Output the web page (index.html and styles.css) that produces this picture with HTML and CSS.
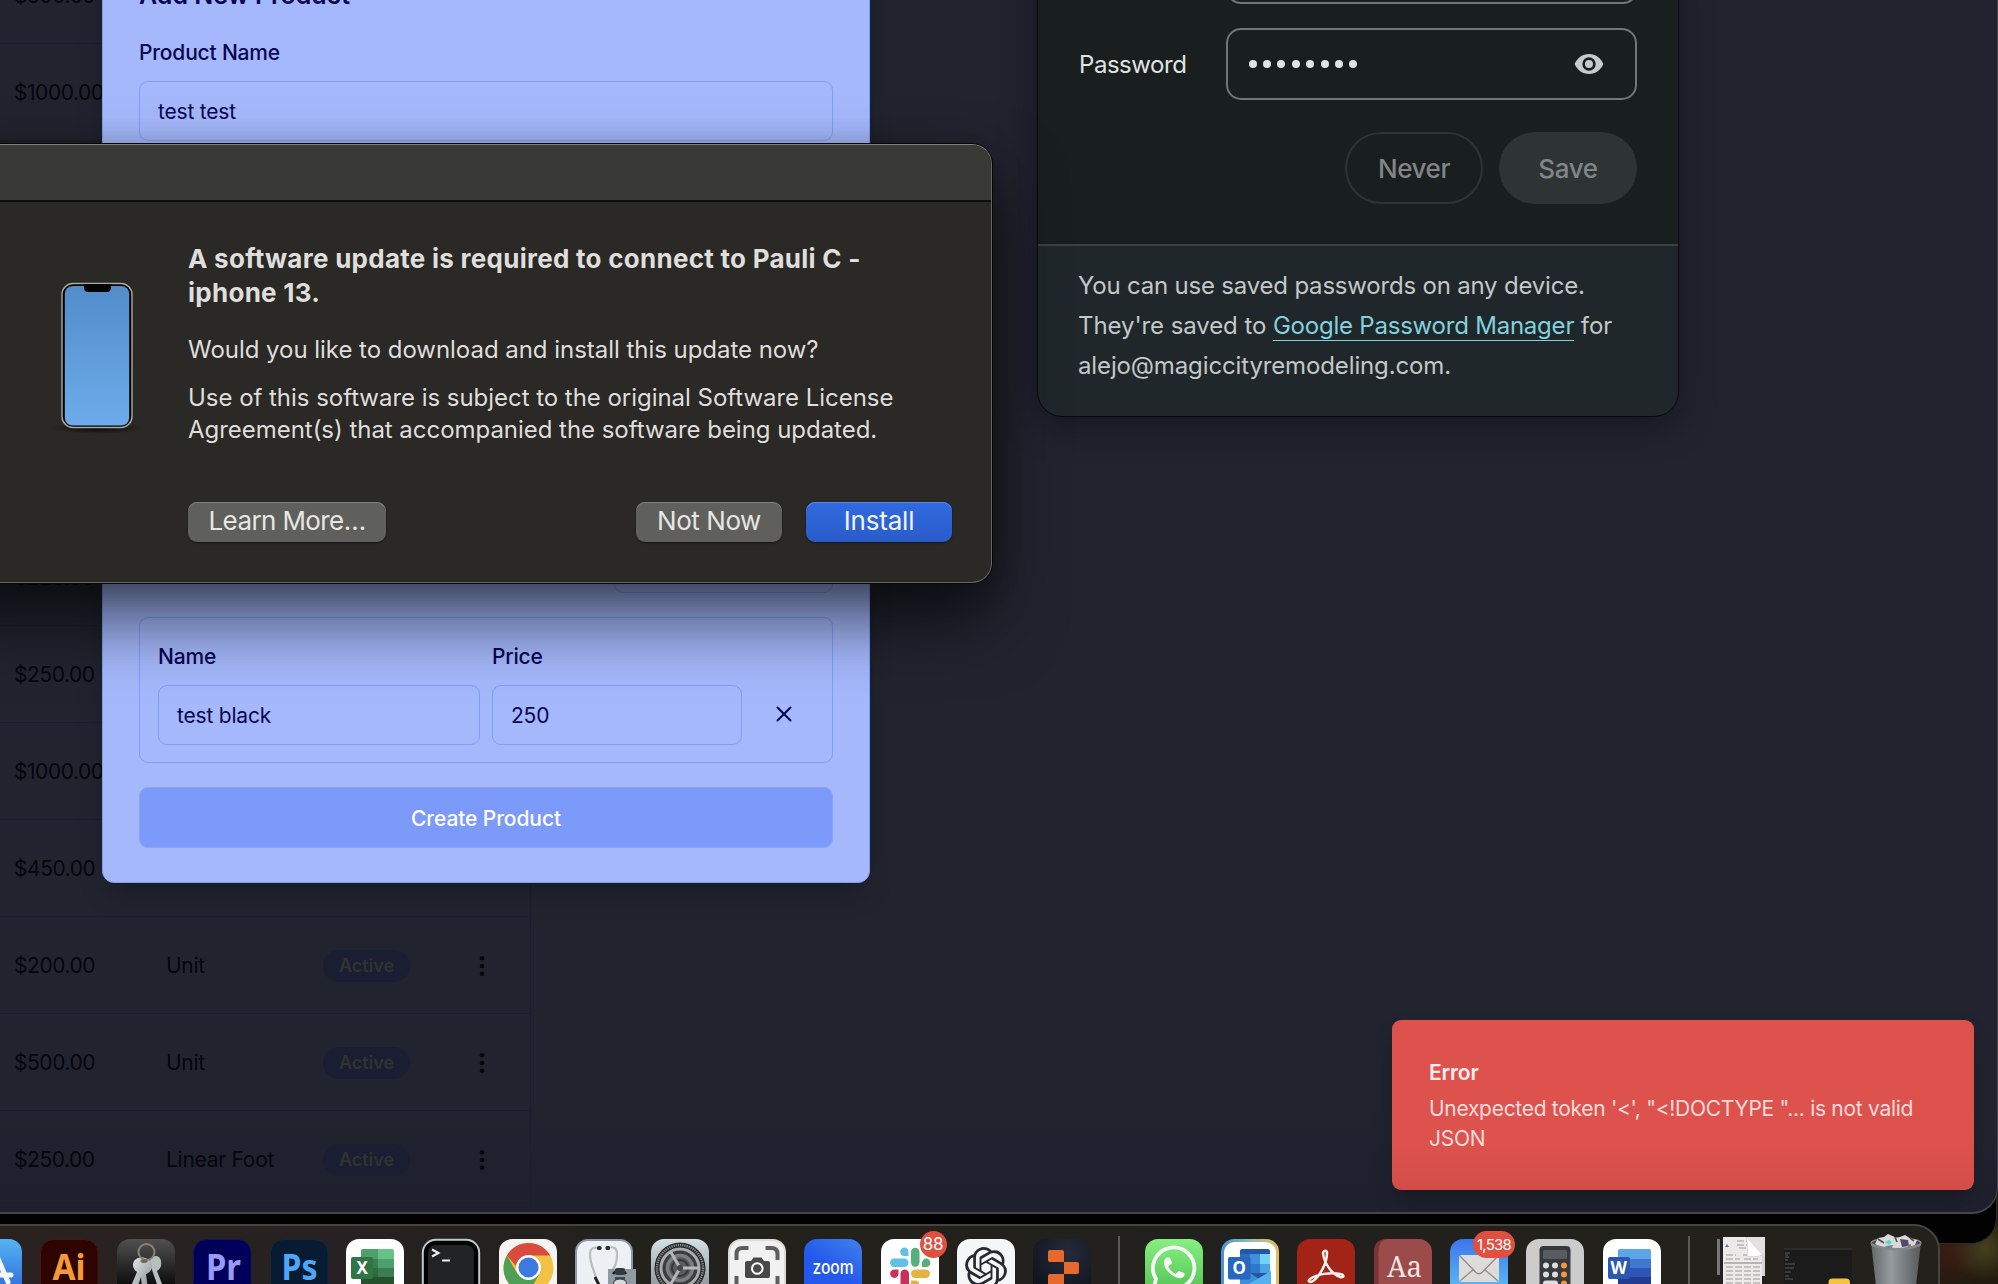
FILE: index.html
```html
<!DOCTYPE html>
<html lang="en">
<head>
<meta charset="utf-8">
<title>Products</title>
<link rel="stylesheet" href="styles.css">
</head>
<body>
<div class="desktop">
  <div class="back-window"></div>

  <main class="browser">
    <div class="table">
      <div class="row"><span>$500.00</span></div>
      <div class="row"><span>$1000.00</span></div>
      <div class="row"></div>
      <div class="row"></div>
      <div class="row"></div>
      <div class="row"></div>
      <div class="row"><span>$220.00</span></div>
      <div class="row"><span>$250.00</span></div>
      <div class="row"><span>$1000.00</span></div>
      <div class="row"><span>$450.00</span></div>
      <div class="row"><span>$200.00</span><span>Unit</span><span class="badge">Active</span><svg class="dots" viewBox="0 0 24 24"><circle cx="12" cy="4.2" r="2.3"/><circle cx="12" cy="12" r="2.3"/><circle cx="12" cy="19.8" r="2.3"/></svg></div>
      <div class="row"><span>$500.00</span><span>Unit</span><span class="badge">Active</span><svg class="dots" viewBox="0 0 24 24"><circle cx="12" cy="4.2" r="2.3"/><circle cx="12" cy="12" r="2.3"/><circle cx="12" cy="19.8" r="2.3"/></svg></div>
      <div class="row"><span>$250.00</span><span>Linear Foot</span><span class="badge">Active</span><svg class="dots" viewBox="0 0 24 24"><circle cx="12" cy="4.2" r="2.3"/><circle cx="12" cy="12" r="2.3"/><circle cx="12" cy="19.8" r="2.3"/></svg></div>
      <div class="row"></div>
    </div>

    <section class="modal">
      <h2 class="modal-title">Add New Product</h2>
      <div class="label">Product Name</div>
      <div class="input">test test</div>
      <div class="add-option"></div>
      <div class="option">
        <div class="field name"><div class="label">Name</div><div class="input">test black</div></div>
        <div class="field price"><div class="label">Price</div><div class="input">250</div></div>
        <div class="remove"><svg width="16" height="16" viewBox="0 0 16 16"><path d="M1.5 1.5l13 13M14.500 1.500l-13 13" fill="none" stroke="#0a0550" stroke-width="2" stroke-linecap="round"/></svg></div>
      </div>
      <div class="create">Create Product</div>
    </section>

    <section class="bubble">
      <div class="bubble-body">
        <div class="user-input"></div>
        <div class="pw-row">
          <span class="pw-label">Password</span>
          <div class="pw-input">
            <div class="pw-dots"><i></i><i></i><i></i><i></i><i></i><i></i><i></i><i></i></div>
            <svg width="30" height="22" viewBox="0 0 30 22"><path fill="#c6cccb" fill-rule="evenodd" d="M15 1C8.500 1 3 5 .7 11 3 17 8.500 21 15 21s12-4 14.300-10C27 5 21.500 1 15 1zm0 16.700a6.700 6.700 0 1 1 0-13.400 6.700 6.700 0 0 1 0 13.400zm0-2.700a4 4 0 1 0 0-8 4 4 0 0 0 0 8z"/></svg>
          </div>
        </div>
        <div class="bubble-actions"><span class="pill never">Never</span><span class="pill save">Save</span></div>
      </div>
      <div class="bubble-foot">
        <div class="l1">You can use saved passwords on any device.</div>
        <div class="l2">They're saved to <a>Google Password Manager</a> for</div>
        <div class="l3">alejo@magiccityremodeling.com.</div>
      </div>
    </section>

    <section class="toast">
      <strong>Error</strong>
      <p>Unexpected token '&lt;', "&lt;!DOCTYPE "... is not valid JSON</p>
    </section>
  </main>

  <section class="alert">
    <div class="titlebar"></div>
    <div class="alert-body">
      <svg class="phone" width="92" height="160" viewBox="0 0 92 160">
        <defs><linearGradient id="ph" x1="0" y1="0" x2="0" y2="1"><stop offset="0" stop-color="#528dca"/><stop offset="1" stop-color="#6dabea"/></linearGradient>
        <radialGradient id="ps"><stop offset="0" stop-color="#000" stop-opacity=".8"/><stop offset="1" stop-color="#000" stop-opacity="0"/></radialGradient></defs>
        <ellipse cx="46" cy="147" rx="46" ry="6" fill="url(#ps)"/>
        <rect x="11" y="2.500" width="70" height="144" rx="11" fill="#000" stroke="#a9aba4" stroke-width="1.400"/>
        <rect x="13.800" y="5" width="64.400" height="139.500" rx="8" fill="url(#ph)"/>
        <path d="M32 3h29c-.8 1-1 2-1 4 0 2-1.500 4-4 4H37c-2.500 0-4-2-4-4 0-2-.2-3-1-4z" fill="#050505"/>
      </svg>
      <div class="alert-text">
        <h1>A software update is required to connect to Pauli C -<br>iphone 13.</h1>
        <p>Would you like to download and install this update now?</p>
        <p>Use of this software is subject to the original Software License<br>Agreement(s) that accompanied the software being updated.</p>
        <div class="alert-actions">
          <span class="btn learn">Learn More…</span>
          <span class="btn notnow">Not Now</span>
          <span class="btn install">Install</span>
        </div>
      </div>
    </div>
  </section>

  <nav class="dock">
    <svg class="app" viewBox="0 0 58 58"><defs><linearGradient id="as" x1="0" y1="0" x2="0" y2="1"><stop offset="0" stop-color="#55b4f0"/><stop offset="1" stop-color="#2a62dc"/></linearGradient></defs><rect width="58" height="58" rx="13" fill="url(#as)"/><path d="M9 38.500h17M36 36h11M32 15L44 43" stroke="#f4f7fb" stroke-width="5" stroke-linecap="round" fill="none"/></svg>
    <svg class="app" viewBox="0 0 58 58"><rect x=".5" y=".5" width="57.500" height="57" rx="13" fill="#2e0300" stroke="#421a12"/><text x="12.500" y="41" font-size="36" textLength="33" lengthAdjust="spacingAndGlyphs" fill="#f49b37">Ai</text></svg>
    <svg class="app" viewBox="0 0 58 58"><defs><linearGradient id="kc" x1="0" y1="0" x2="0" y2="1"><stop offset="0" stop-color="#505050"/><stop offset=".8" stop-color="#0c0c0c"/></linearGradient><linearGradient id="ky" x1="0" y1="0" x2="1" y2="1"><stop offset="0" stop-color="#e4e9e9"/><stop offset="1" stop-color="#87908f"/></linearGradient></defs><rect width="58" height="58" rx="13" fill="url(#kc)"/><path d="M33 21c2-5 10-6 11 1 1 5-1 8-4 10l5 13-4 3-7-20z" fill="#b6bfbe"/><path d="M17 22c4-6 16-4 18 3 1 6-3 9-6 10l2 15h-6l-1-12-4 12-6-3 6-14c-4-3-5-7-3-11z" fill="url(#ky)"/><circle cx="29.500" cy="13" r="8" fill="none" stroke="#8b8178" stroke-width="2"/><ellipse cx="27" cy="22" rx="3.500" ry="2" fill="#75665f"/></svg>
    <svg class="app" viewBox="0 0 58 58"><rect x=".5" y=".5" width="57.500" height="57" rx="13" fill="#00005a" stroke="#17174a"/><text x="13" y="41" font-size="36" textLength="35" lengthAdjust="spacingAndGlyphs" fill="#9a9af6">Pr</text></svg>
    <svg class="app" viewBox="0 0 58 58"><rect x=".5" y=".5" width="57.500" height="57" rx="13" fill="#071c33" stroke="#14283c"/><text x="11.500" y="41" font-size="36" textLength="36" lengthAdjust="spacingAndGlyphs" fill="#4ea6f8">Ps</text></svg>
    <svg class="app" viewBox="0 0 58 58"><rect width="58" height="58" rx="13" fill="#fff"/><path d="M17 10h15v10H15v-8q0-2 2-2z" fill="#4d9f6b"/><path d="M32 10h14q2 0 2 2v8H32z" fill="#67c287"/><path d="M15 20h17v9H15z" fill="#3b7d50"/><path d="M32 20h16v9H32z" fill="#4d9f6b"/><path d="M15 29h33v9H15z" fill="#2f6a41"/><path d="M32 29h16v9H32z" fill="#3b7d50"/><path d="M15 38h33v12H15z" fill="#25512f"/><rect x="5" y="18" width="22" height="22" rx="2" fill="#2f7646"/><text x="10.500" y="35" font-size="17" fill="#fff">X</text></svg>
    <svg class="app" viewBox="0 0 58 58"><rect x=".8" y=".8" width="56.400" height="56.400" rx="13" fill="#000" stroke="#bccbd3" stroke-width="2"/><rect x="6" y="6" width="46" height="48" rx="8" fill="#222325"/><path d="M10 10.500l6.500 3.500-6.500 3.500M20 21.500h8" stroke="#f2f2f2" stroke-width="2" fill="none"/></svg>
    <svg class="app" viewBox="0 0 58 58"><rect width="58" height="58" rx="13" fill="#f5f4f2"/><circle cx="29.500" cy="29" r="25" fill="#f3c144"/><path d="M7.850 16.500A25 25 0 0 1 51.150 16.500H29.500v25z" fill="#d94c3d"/><path d="M7.850 16.500A25 25 0 0 0 29.500 54L40.300 35.250H18.700z" fill="#4f9e55"/><circle cx="29.500" cy="28.500" r="12.500" fill="#fff"/><circle cx="29.500" cy="28.500" r="10" fill="#3f78e0"/></svg>
    <svg class="app" viewBox="0 0 58 58"><rect x="1" y="1" width="56" height="56" rx="12" fill="#edf0f5" stroke="#8b98a3" stroke-width="2"/><path d="M23 9c-6-1-8 1-8 6 0 11 4 15 6 24M32 9c7-2 10 0 10 6 0 9-2 13-6 18" stroke="#b9bcc0" stroke-width="2.200" fill="none"/><rect x="22" y="7" width="4.500" height="4" rx="1.500" fill="#2b2d30"/><rect x="30.500" y="7" width="4.500" height="4" rx="1.500" fill="#2b2d30"/><path d="M20 38l5 10" stroke="#222" stroke-width="3"/><path d="M33 30h28v28H33z" fill="#8f9aa2"/><path d="M38 35q7-8 13 0" fill="none" stroke="#17181a" stroke-width="2.500"/><rect x="40" y="29" width="10" height="7" rx="2" fill="#333b42"/><path d="M40 38h10v6H40z" fill="#40464b"/><path d="M39 42q6-4 12 0l2 13H37z" fill="#d7dbde" stroke="#3b4045"/></svg>
    <svg class="app" viewBox="0 0 58 58"><defs><linearGradient id="st" x1="0" y1="0" x2="0" y2="1"><stop offset="0" stop-color="#d3e0e7"/><stop offset="1" stop-color="#85888a"/></linearGradient></defs><rect width="58" height="58" rx="13" fill="url(#st)"/><circle cx="29" cy="29" r="25.500" fill="#26282a"/><circle cx="29" cy="29" r="23" fill="none" stroke="#8d9092" stroke-width="2.500" stroke-dasharray="1.200 1"/><circle cx="29" cy="29" r="19" fill="#3b3d3f" stroke="#a9acae" stroke-width="3"/><circle cx="29" cy="29" r="12.500" fill="#55585a" stroke="#7b7e80" stroke-width="3.500"/><circle cx="29" cy="29" r="8" fill="#5a5d5f" stroke="#37393b" stroke-width="2"/><path d="M29 29h19M29 29L19.500 12.500M29 29l-9.500 16.500" stroke="#b5b8ba" stroke-width="3"/><circle cx="29" cy="29" r="3" fill="#444"/></svg>
    <svg class="app" viewBox="0 0 58 58"><rect width="58" height="58" rx="13" fill="#dedad8"/><rect x="2" y="2" width="54" height="56" rx="11" fill="#f2f1f1"/><path d="M8.500 21v-6q0-6 6-6h6M37.500 9h6q6 0 6 6v6M8.500 37v12M49.500 37v12" stroke="#5e5e5e" stroke-width="4" fill="none"/><path d="M19 22h4l2.500-3.500h8L36 22h4q2 0 2 2v13q0 2-2 2H19q-2 0-2-2V24q0-2 2-2z" fill="#484848"/><circle cx="29.300" cy="29.500" r="5.300" fill="#4a4a4a" stroke="#fff" stroke-width="2"/></svg>
    <svg class="app" viewBox="0 0 58 58"><defs><linearGradient id="zm" x1="1" y1="0" x2="0.600" y2=".6"><stop offset="0" stop-color="#4182e9"/><stop offset="1" stop-color="#2459ee"/></linearGradient></defs><rect width="58" height="58" rx="13" fill="url(#zm)"/><text class="soft" x="8.500" y="34.800" font-size="18.500" textLength="41" lengthAdjust="spacingAndGlyphs" fill="#fff">zoom</text></svg>
    <div class="app badged"><svg class="app" viewBox="0 0 58 58"><rect width="58" height="58" rx="13" fill="#fff"/><path d="M27.500 17h-4a4.200 4.200 0 1 1 4-4.200z" fill="#5fc0e8"/><rect x="9" y="19.500" width="18.500" height="8.500" rx="4.200" fill="#5fc0e8"/><rect x="30" y="8.700" width="8.500" height="19" rx="4.200" fill="#56ae7d"/><path d="M41 28v-4a4.200 4.200 0 1 1 4.200 4z" fill="#56ae7d"/><path d="M17.500 30.500v4a4.200 4.200 0 1 1-4.200-4z" fill="#cd2f5b"/><rect x="19.500" y="30.500" width="8.500" height="19" rx="4.200" fill="#cd2f5b"/><rect x="30" y="30.500" width="19" height="8.500" rx="4.200" fill="#e3b344"/><path d="M30 41.500h4a4.200 4.200 0 1 1-4 4.200z" fill="#e3b344"/></svg><span class="count">88</span></div>
    <svg class="app" viewBox="0 0 58 58"><rect width="58" height="58" rx="13" fill="#f5f6f8"/><path transform="translate(8 8) scale(1.75)" fill="#262a30" d="M22.2819 9.8211a5.9847 5.9847 0 0 0-.5157-4.9108 6.0462 6.0462 0 0 0-6.5098-2.9A6.0651 6.0651 0 0 0 4.9807 4.1818a5.9847 5.9847 0 0 0-3.9977 2.9 6.0462 6.0462 0 0 0 .7427 7.0966 5.98 5.98 0 0 0 .511 4.9107 6.051 6.051 0 0 0 6.5146 2.9001A5.9847 5.9847 0 0 0 13.2599 24a6.0557 6.0557 0 0 0 5.7718-4.2058 5.9894 5.9894 0 0 0 3.9977-2.9001 6.0557 6.0557 0 0 0-.7475-7.0729zm-9.022 12.6081a4.4755 4.4755 0 0 1-2.8764-1.0408l.1419-.0804 4.7783-2.7582a.7948.7948 0 0 0 .3927-.6813v-6.7369l2.02 1.1686a.071.071 0 0 1 .038.052v5.5826a4.504 4.504 0 0 1-4.4945 4.4944zm-9.6607-4.1254a4.4708 4.4708 0 0 1-.5346-3.0137l.142.0852 4.783 2.7582a.7712.7712 0 0 0 .7806 0l5.8428-3.3685v2.3324a.0804.0804 0 0 1-.0332.0615L9.74 19.9502a4.4992 4.4992 0 0 1-6.1408-1.6464zM2.3408 7.8956a4.485 4.485 0 0 1 2.3655-1.9728V11.6a.7664.7664 0 0 0 .3879.6765l5.8144 3.3543-2.0201 1.1685a.0757.0757 0 0 1-.071 0l-4.8303-2.7865A4.504 4.504 0 0 1 2.3408 7.872zm16.5963 3.8558L13.1038 8.364 15.1192 7.2a.0757.0757 0 0 1 .071 0l4.8303 2.7913a4.4944 4.4944 0 0 1-.6765 8.1042v-5.6772a.79.79 0 0 0-.407-.667zm2.0107-3.0231l-.142-.0852-4.7735-2.7818a.7759.7759 0 0 0-.7854 0L9.409 9.2297V6.8974a.0662.0662 0 0 1 .0284-.0615l4.8303-2.7866a4.4992 4.4992 0 0 1 6.6802 4.66zM8.3065 12.863l-2.02-1.1638a.0804.0804 0 0 1-.038-.0567V6.0742a4.4992 4.4992 0 0 1 7.3757-3.4537l-.142.0805L8.704 5.459a.7948.7948 0 0 0-.3927.6813zm1.0976-2.3654l2.602-1.4998 2.6069 1.4998v2.9994l-2.5974 1.4997-2.6067-1.4997Z"/></svg>
    <svg class="app" viewBox="0 0 58 58"><defs><radialGradient id="rp" cx=".6" cy=".25" r=".7"><stop offset="0" stop-color="#262b3b"/><stop offset="1" stop-color="#11151f"/></radialGradient></defs><rect width="58" height="58" rx="13" fill="url(#rp)"/><path d="M17 11h12q2 0 2 2v10H17q-2 0-2-2v-8q0-2 2-2zM31 23h13q2 0 2 2v8q0 2-2 2H31zM17 35h14v10q0 2-2 2H17q-2 0-2-2v-8q0-2 2-2z" fill="#e66a2e"/></svg>
    <i class="sep first"></i>
    <svg class="app" viewBox="0 0 58 58"><defs><linearGradient id="wa" x1="0" y1="0" x2="0" y2="1"><stop offset="0" stop-color="#86f082"/><stop offset="1" stop-color="#4fbf4f"/></linearGradient></defs><rect width="58" height="58" rx="13" fill="url(#wa)"/><path d="M11 40a20.700 20.700 0 1 1 8 7.500L8.500 50z" fill="none" stroke="#f5f8f5" stroke-width="3.800"/><path transform="translate(15.500 15) scale(1.150)" fill="#f5f8f5" d="M6.620 10.790c1.440 2.830 3.760 5.140 6.590 6.590l2.200-2.200c.27-.27.67-.36 1.020-.24l3.700 1.300c.6.300.9.700.87 1.260C21 20 18.500 21 16.500 21 9 20 3 12.500 3 7.500 3 5.500 4 3.300 5.500 3h1.800c.6 0 1 .4 1.200 1l1.300 3c.2.500.1 1-.1 1.300z"/></svg>
    <svg class="app" viewBox="0 0 58 58"><defs><linearGradient id="ol"><stop offset="0" stop-color="#4a8fd8"/><stop offset=".5" stop-color="#8dc0ae"/><stop offset="1" stop-color="#e4bd62"/></linearGradient></defs><rect width="58" height="58" rx="13" fill="url(#ol)"/><rect x="3" y="3" width="52" height="58" rx="11" fill="#fff"/><path d="M19 12q0-2 2-2h26q2 0 2 2v3H19z" fill="#2257a5"/><path d="M19 15h10v20H19z" fill="#2c6bc2"/><path d="M29 15h10v10H29z" fill="#418fdc"/><path d="M39 15h10v10H39z" fill="#74d3fa"/><path d="M29 25h10v10H29z" fill="#2e78cc"/><path d="M39 25h10v10H39z" fill="#4aa5e6"/><path d="M19 35h30v20H19z" fill="#3b8fdc"/><path d="M29 34h18L38 40z" fill="#2456a0"/><path d="M19 50L50 32v23H19z" fill="#54b1ee"/><rect x="7" y="18" width="22.500" height="22.500" rx="2" fill="#2767c0"/><text x="11.500" y="35" font-size="17" fill="#fff">O</text></svg>
    <svg class="app" viewBox="0 0 58 58"><rect width="58" height="58" rx="13" fill="#a32417"/><path d="M26 14c1-3 4-3 4 0 0 11-8 24-14 28-3 2-6 0-3-2 7-5 21-7 30-5 5 1 4 4 0 3-7-2-16-13-17-24z" fill="none" stroke="#fbf2f0" stroke-width="2.500"/></svg>
    <svg class="app" viewBox="0 0 58 58"><rect width="58" height="58" rx="13" fill="#9b4b49"/><path d="M13 0v0Q5 1 4.500 13v32q0 8 6 12.500Q0 55 0 45V13Q0 0 13 0z" fill="#7d3435"/><text class="serif" x="13" y="38" font-size="29" textLength="35" lengthAdjust="spacingAndGlyphs" fill="#f1e4e1">Aa</text></svg>
    <div class="app badged"><svg class="app" viewBox="0 0 58 58"><defs><linearGradient id="ml" x1="0" y1="0" x2="0" y2="1"><stop offset="0" stop-color="#3c74ec"/><stop offset="1" stop-color="#5fc6f7"/></linearGradient></defs><rect width="58" height="58" rx="13" fill="url(#ml)"/><rect x="9" y="16" width="40" height="27" rx="2.500" fill="#dedcda"/><path d="M10 17l15.500 16q3.500 3.500 7 0L48 17M10 42l14-12M48 42L34 30" fill="none" stroke="#8f8c8a" stroke-width="1.300"/></svg><span class="count wide">1,538</span></div>
    <svg class="app" viewBox="0 0 58 58"><rect width="58" height="58" rx="13" fill="#cbcccb"/><rect x="13.500" y="7" width="31" height="46" rx="4" fill="#36393d"/><rect x="17" y="11" width="24" height="9" rx="1.500" fill="#595c5f"/><g fill="#dedede"><circle cx="20" cy="26.500" r="3"/><circle cx="29" cy="26.500" r="3"/><circle cx="20" cy="35.500" r="3"/><circle cx="29" cy="35.500" r="3"/><rect x="17" y="41.500" width="15" height="6" rx="3"/></g><g fill="#f19a37"><circle cx="38" cy="26.500" r="3"/><circle cx="38" cy="35.500" r="3"/><circle cx="38" cy="44.500" r="3"/></g></svg>
    <svg class="app" viewBox="0 0 58 58"><rect width="58" height="58" rx="13" fill="#fff"/><path d="M15 12q0-2 2-2h29q2 0 2 2v8H15z" fill="#5da4e8"/><path d="M15 20h33v9H15z" fill="#4078cf"/><path d="M15 29h33v9H15z" fill="#2c56b8"/><path d="M15 38h33v12H15z" fill="#213c90"/><rect x="5" y="18" width="22" height="22" rx="2" fill="#2b57b3"/><text x="7.500" y="35" font-size="17" fill="#fff">W</text></svg>
    <i class="sep second"></i>
    <svg class="docs" width="48" height="50" viewBox="0 0 48 50"><path d="M0 2h10v36H0z" fill="#777"/><path d="M3 1h3v49H3z" fill="#222"/><path d="M40 3h8v36h-8z" fill="#d5d5d5"/><path d="M6 0h39v50H6z" fill="#eceae9"/><path d="M20 4h10M20 8h10M22 11h8M9 18h10M26 18h10M9 22h14M27 22h14M9 30h34M9 34h34M9 38h34M9 42h34M9 46h34" stroke="#9a9a9a" stroke-width="1.200" stroke-dasharray="7 2"/><path d="M7 26h38" stroke="#b4b4b4" stroke-width="2"/><path d="M29 0l17 18q-10 3-16 1 2-8-1-19z" fill="#fff" stroke="#c9c9c9" stroke-width=".7"/><path d="M29 0h19v20z" fill="#e2e1e0"/><path d="M8 10l2-3 2 3z" fill="#3f7fd0"/></svg>
    <svg class="mini" width="68" height="40" viewBox="0 0 68 40"><path d="M0 0h68v40H0z" fill="#1b1b1b"/><path d="M0 0h68v2H0z" fill="#2b2b2b"/><path d="M1 5h5M1 7h3M1 9h4M1 12h3M1 16h10M1 20h9M1 24h6M1 28h4M1 31h8" stroke="#5a5a5a" stroke-width="1"/><rect x="44.500" y="30.500" width="21.500" height="14" rx="4" fill="#f4c33f"/></svg>
    <svg class="trash" width="52" height="52" viewBox="0 0 52 52"><defs><linearGradient id="tr"><stop offset="0" stop-color="#63676a"/><stop offset=".4" stop-color="#969b9f"/><stop offset="1" stop-color="#55595c"/></linearGradient></defs><path d="M1 8q25 8 50 0l-5 44H6z" fill="url(#tr)"/><ellipse cx="26" cy="9" rx="25" ry="5" fill="#474a4d" stroke="#8d9194" stroke-width="1.300"/><path d="M5 10l3-6 6-1 4-3 9 4 8-3 6 4 6 1-2 5-9 4-9-1-8 2-8-3z" fill="#d9d9d8"/><path d="M8 5l6 4M25 3l2 5M40 4l4 3" stroke="#525252" stroke-width="1.600"/><path d="M15 8l4-2 3 2-3 3z" fill="#5ad4e0"/><path d="M30 5l8 1 1 6-7 1z" fill="#4c4a6e"/><path d="M37 11l4-1v3h-3z" fill="#b8643a"/><path d="M15 12l8-1-1 3-5 1z" fill="#7b8790"/><path d="M1 9q25 10 50 0l-.5 3Q26 21 1.500 12z" fill="#83888b"/></svg>
  </nav>
</div>
</body>
</html>
```
FILE: styles.css
```css
* { box-sizing: border-box; }
body { margin: 0; font-family: Inter, "Liberation Sans", sans-serif; }
h1, h2, p { margin: 0; }

.desktop {
  position: relative; width: 1998px; height: 1284px; overflow: hidden;
  background:
    radial-gradient(circle at 1985px 1248px, #46401f 0, rgba(60, 56, 24, 0) 34px),
    radial-gradient(circle at 1950px 1250px, #3c1c12 0, rgba(60, 28, 18, 0) 40px),
    linear-gradient(#2b1c10, #211b0f);
}
.back-window {
  position: absolute; left: -20px; top: 0; width: 2017px; height: 1244px;
  background: #020202; border: 1px solid #2c2c2c; border-radius: 0 0 26px 0;
}

.browser {
  position: absolute; left: -4px; top: -10px; width: 2002px; height: 1224px; overflow: hidden;
  padding: 0 0 0 4px;
  background: linear-gradient(#21242f 0, #21242f 1120px, #1e212d 1200px);
  border: solid #44464f; border-width: 0 1.500px 2px 0; border-radius: 0 0 26px 0;
}

.table { width: 531px; margin-top: -43px; border-right: 1px solid #1b1e30; }
.row {
  display: grid; grid-template-columns: 152px 157px 147px 30px; align-items: center;
  height: 97px; padding: 1px 0 0 14px; border-bottom: 1px solid #1b1e30;
  font-size: 21px; letter-spacing: -.45px; color: #04050d;
}
.row span:nth-child(2) { letter-spacing: -.27px; }
.row .badge {
  justify-self: start; width: 87px; height: 32px; border-radius: 16px; background: #191e32;
  font-size: 18px; font-weight: 600; line-height: 32px; text-align: center; letter-spacing: 0; color: #303330;
}
.dots { width: 24px; height: 24px; fill: #04050d; }

.modal {
  position: absolute; left: 106px; top: -45px; width: 768px; height: 938px; padding: 36px 36px 35px;
  display: flex; flex-direction: column;
  background: #a4b8fb; border: 1px solid #7f9cf9; border-radius: 12px; color: #0a0550;
  box-shadow: 0 15px 30px -8px rgba(0, 0, 0, .3);
}
.modal-title { font-size: 25px; line-height: 27px; font-weight: 600; letter-spacing: 0; margin-bottom: 33px; }
.label { font-size: 21px; line-height: 21px; font-weight: 500; letter-spacing: -.18px; margin-bottom: 18px; }
.input {
  height: 60px; padding: 0 18px; border: 1px solid #829df8; border-radius: 9px;
  font-size: 21px; line-height: 59px; letter-spacing: -.2px;
}
.add-option { align-self: flex-end; flex: none; width: 219px; height: 60px; margin-top: 392px; border: 1px solid #829df8; border-radius: 9px; }
.option {
  display: flex; gap: 12px; height: 146px; margin-top: 24px; padding: 28px 18px 18px;
  border: 1px solid #829df8; border-radius: 9px;
}
.name { width: 322px; }
.price { width: 250px; }
.remove { width: 60px; display: flex; align-items: center; justify-content: center; padding-top: 38px; }
.create {
  height: 61px; margin-top: 24px; border: 1px solid #8aa4fa; border-radius: 9px; background: #7c9af9;
  font-size: 21px; line-height: 62px; font-weight: 500; letter-spacing: -.09px; text-align: center; color: #fff;
}

.bubble {
  position: absolute; left: 1042px; top: -42px; width: 640px; height: 468px; overflow: hidden;
  background: #191e1e; border-radius: 24px; color: #e0e4e3;
  outline: 1px solid #08090c;
  box-shadow: 0 8px 34px rgba(8, 6, 20, .5);
}
.bubble-body { height: 298px; padding: 4px 41px 0; border-bottom: 2px solid #3b3f41; background: #191e1e; }
.user-input { width: 412px; height: 52px; margin-left: 147px; border: 2px solid #727676; border-radius: 15px; }
.pw-row { display: flex; align-items: center; margin-top: 24px; }
.pw-label { width: 147px; font-size: 24px; letter-spacing: -.45px; }
.pw-input {
  width: 412px; height: 72px; padding: 0 31px 0 21px; display: flex; align-items: center; justify-content: space-between;
  border: 2px solid #727676; border-radius: 15px;
}
.pw-dots { display: flex; gap: 6.400px; }
.pw-dots i { width: 8px; height: 8px; border-radius: 50%; background: #e0e4e3; }
.bubble-actions { display: flex; justify-content: flex-end; gap: 16px; margin-top: 32px; }
.pill { width: 138px; height: 72px; border-radius: 36px; font-size: 26px; font-weight: 500; line-height: 73px; letter-spacing: -.4px; text-align: center; color: #828587; }
.never { border: 2px solid #2e3334; line-height: 69px; }
.save { background: #2e3334; }
.bubble-foot { height: 172px; padding: 20px 40px; background: #20272a; font-size: 24px; line-height: 40px; color: #c3c8c8; white-space: nowrap; }
.l1 { letter-spacing: -.2px; }
.l2 { letter-spacing: -.08px; }
.l2 a { letter-spacing: -.22px; color: #83d1de; border-bottom: 1px solid #83d1de; }
.l3 { letter-spacing: -.132px; }

.toast {
  position: absolute; left: 1396px; top: 1030px; width: 582px; height: 170px; padding: 38px 37px 36px;
  border-radius: 9px; background: linear-gradient(#de524d 70%, #d34d48); color: #fff;
  font-size: 21px; line-height: 30px; box-shadow: 0 12px 26px -6px rgba(0, 0, 0, .3);
}
.toast strong { display: block; margin-bottom: 6px; font-weight: 600; letter-spacing: -.133px; color: #fdeeee; }
.toast p { letter-spacing: -.29px; color: #fadcdb; }

.alert {
  position: absolute; left: -60px; top: 144px; width: 1052px; height: 439px;
  background: #2a2925; border: 1.500px solid #666661; border-top-color: #80807c; border-radius: 20px;
  box-shadow: 0 0 0 1px #060606, 0 36px 70px rgba(0, 0, 0, .62), 0 4px 30px rgba(0, 0, 0, .22);
}
.titlebar { height: 57px; background: #393936; border-bottom: 2px solid #0d0d0b; border-radius: 19px 19px 0 0; }
.alert-body { display: flex; padding: 40px 38px 0 110px; }
.phone { margin-top: 39px; }
.alert-text { width: 765px; margin-left: 45px; color: #dfdedd; }
.alert-text h1 { font-size: 26px; line-height: 34px; font-weight: 700; letter-spacing: .27px; margin-bottom: 24px; white-space: nowrap; }
.alert-text p { font-size: 24px; line-height: 32px; letter-spacing: -.035px; margin-bottom: 16px; white-space: nowrap; }
.alert-actions { display: flex; padding-top: 40px; }
.btn {
  height: 40px; border-radius: 9px; background: #5f5f5b; color: #e6e6e4; font-size: 26px; line-height: 38px; text-align: center;
  box-shadow: inset 0 1px 0 #81817d, 0 1px 2px rgba(0, 0, 0, .5);
}
.learn { width: 198px; letter-spacing: -.6px; }
.notnow { width: 146px; margin-left: 250px; letter-spacing: -.45px; }
.install { width: 146px; margin-left: 24px; letter-spacing: -.2px; background: linear-gradient(#3069e0, #2a5cc8); color: #f2f4fb; box-shadow: inset 0 1px 0 #5b88e6, 0 1px 2px rgba(0, 0, 0, .5); }

.dock {
  position: absolute; left: -60px; top: 1224px; width: 2000px; height: 90px; padding: 13px 0 0 22px;
  display: flex; align-items: flex-start; gap: 18.380px;
  background: linear-gradient(90deg, #29221f 0, #282123 380px, #22211c 720px, #22201c 1500px, #23211b 1800px);
  border: 2px solid #45443f; border-radius: 26px;
}
.app { flex: none; width: 58px; height: 58px; overflow: visible; }
.app text { font-family: "Noto Sans", "Open Sans", sans-serif; font-weight: 700; }
.app text.soft { font-family: Inter, sans-serif; font-weight: 500; }
.app text.serif { font-family: "Noto Serif", "DejaVu Serif", serif; font-weight: 400; }
.badged { position: relative; }
.count {
  position: absolute; right: -8px; top: -8px; min-width: 27px; height: 27px; border-radius: 14px; background: #e04f3f;
  color: #fff; font-size: 17px; line-height: 27px; text-align: center; letter-spacing: -.3px;
}
.count.wide { width: 42px; right: -7px; font-size: 15px; letter-spacing: -.8px; }
.sep { flex: none; width: 2px; height: 60px; margin-top: -3px; background: #5c5a56; }
.first { margin: -3px 6px 0 8.500px; }
.second { margin: -3px 8px 0 9px; }
.docs, .mini, .trash { flex: none; }
.docs { margin-top: -2px; }
.mini { margin: 9px 0 0 1px; }
.trash { margin-top: -5px; }
```
